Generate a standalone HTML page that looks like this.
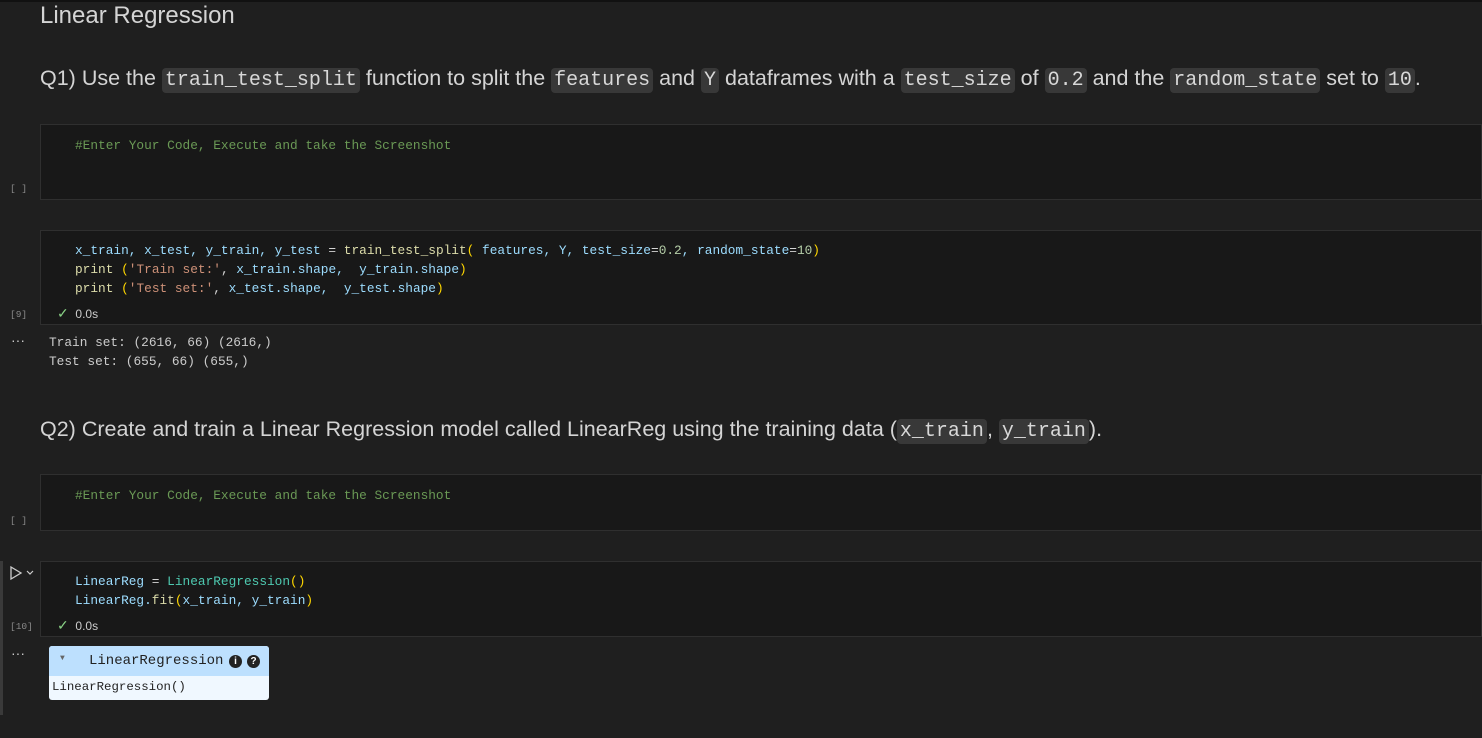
<!DOCTYPE html>
<html><head><meta charset="utf-8"><style>
*{margin:0;padding:0;box-sizing:border-box}
body{width:1482px;height:738px;background:#1f1f1f;overflow:hidden;position:relative;font-family:"Liberation Sans",sans-serif;color:#cccccc}
.a{position:absolute;white-space:pre}
.md{font-size:21.5px;color:#d4d4d4}
.ic{font-family:"Liberation Mono",monospace;font-size:20px;background:#383838;border-radius:4px;padding:1px 3px;color:#d8d8d8}
.cell{position:absolute;left:40px;right:0;background:#181818;border:1px solid #2f2f2f}
.code{font-family:"Liberation Mono",monospace;font-size:12.8px;line-height:19px;color:#9cdcfe}
.cm{color:#6a9955}.s{color:#ce9178}.f{color:#dcdcaa}.y{color:#ffd700}.w{color:#d4d4d4}.n{color:#b5cea8}.c{color:#4ec9b0}
.lbl{position:absolute;left:10px;font-family:"Liberation Mono",monospace;font-size:9.5px;color:#8a8a8a}
.out{font-family:"Liberation Mono",monospace;font-size:12.8px;line-height:19px;color:#cccccc}
.chk{font-size:12px;color:#ccc}
</style></head><body>
<div style="position:absolute;left:0;top:0;width:1482px;height:2px;background:#111"></div>
<div class="a" style="left:40px;top:2px;font-size:24px;color:#d4d4d4">Linear Regression</div>
<div class="a md" style="left:40px;top:66px">Q1) Use the <span class="ic">train_test_split</span> function to split the <span class="ic">features</span> and <span class="ic">Y</span> dataframes with a <span class="ic">test_size</span> of <span class="ic">0.2</span> and the <span class="ic">random_state</span> set to <span class="ic">10</span>.</div>

<div class="cell" style="top:124px;height:76px"></div>
<div class="a code cm" style="left:75px;top:136px">#Enter Your Code, Execute and take the Screenshot</div>
<div class="lbl" style="top:183px">[ ]</div>

<div class="cell" style="top:230px;height:95px"></div>
<div class="a code" style="left:75px;top:241px">x_train, x_test, y_train, y_test <span class="w">=</span> <span class="f">train_test_split</span><span class="y">(</span> features, Y, test_size<span class="w">=</span><span class="n">0.2</span>, random_state<span class="w">=</span><span class="n">10</span><span class="y">)</span>
<span class="f">print</span> <span class="y">(</span><span class="s">'Train set:'</span><span class="w">,</span> x_train.shape,  y_train.shape<span class="y">)</span>
<span class="f">print</span> <span class="y">(</span><span class="s">'Test set:'</span><span class="w">,</span> x_test.shape,  y_test.shape<span class="y">)</span></div>
<div class="lbl" style="top:309px">[9]</div>
<div class="a chk" style="left:57px;top:305px"><span style="color:#89d185;font-size:14px">✓</span>  0.0s</div>
<div class="a" style="left:11px;top:332px;color:#ccc;font-size:14px">···</div>
<div class="a out" style="left:49px;top:333px">Train set: (2616, 66) (2616,)
Test set: (655, 66) (655,)</div>

<div class="a md" style="left:40px;top:417px">Q2) Create and train a Linear Regression model called LinearReg using the training data (<span class="ic">x_train</span>, <span class="ic">y_train</span>).</div>

<div class="cell" style="top:474px;height:57px"></div>
<div class="a code cm" style="left:75px;top:486px">#Enter Your Code, Execute and take the Screenshot</div>
<div class="lbl" style="top:515px">[ ]</div>

<div style="position:absolute;left:0;top:561px;width:3px;height:154px;background:#3a3a3a"></div>
<svg style="position:absolute;left:9px;top:565px" width="30" height="16"><path d="M2 2 L12 8 L2 14 Z" fill="none" stroke="#ccc" stroke-width="1.3"/><path d="M18 6 L21 9 L24 6" fill="none" stroke="#ccc" stroke-width="1.2"/></svg>
<div class="cell" style="top:561px;height:76px"></div>
<div class="a code" style="left:75px;top:572px">LinearReg <span class="w">=</span> <span class="c">LinearRegression</span><span class="y">()</span>
LinearReg.<span class="f">fit</span><span class="y">(</span>x_train, y_train<span class="y">)</span></div>
<div class="lbl" style="top:621px">[10]</div>
<div class="a chk" style="left:57px;top:617px"><span style="color:#89d185;font-size:14px">✓</span>  0.0s</div>
<div class="a" style="left:11px;top:645px;color:#ccc;font-size:14px">···</div>
<div style="position:absolute;left:49px;top:646px;width:220px;height:54px;background:#f0f8ff;border-radius:3px;overflow:hidden">
<div style="height:30px;background:#bde0fe;position:relative;font-family:'Liberation Mono',monospace;font-size:14px;color:#222">
<span style="position:absolute;left:11px;top:8px;font-size:8px;color:#666">▼</span>
<span style="position:absolute;left:40px;top:7px">LinearRegression</span>
<span style="position:absolute;left:180px;top:9px;width:13px;height:13px;border-radius:7px;background:#222;color:#fff;font-size:10px;text-align:center;line-height:13px;font-family:'Liberation Sans';font-weight:bold">i</span>
<span style="position:absolute;left:198px;top:9px;width:13px;height:13px;border-radius:7px;background:#222;color:#fff;font-size:10px;text-align:center;line-height:13px;font-family:'Liberation Sans';font-weight:bold">?</span>
</div>
<div style="position:absolute;left:3px;top:34px;font-family:'Liberation Mono',monospace;font-size:12.4px;color:#222">LinearRegression()</div>
</div>
</body></html>
